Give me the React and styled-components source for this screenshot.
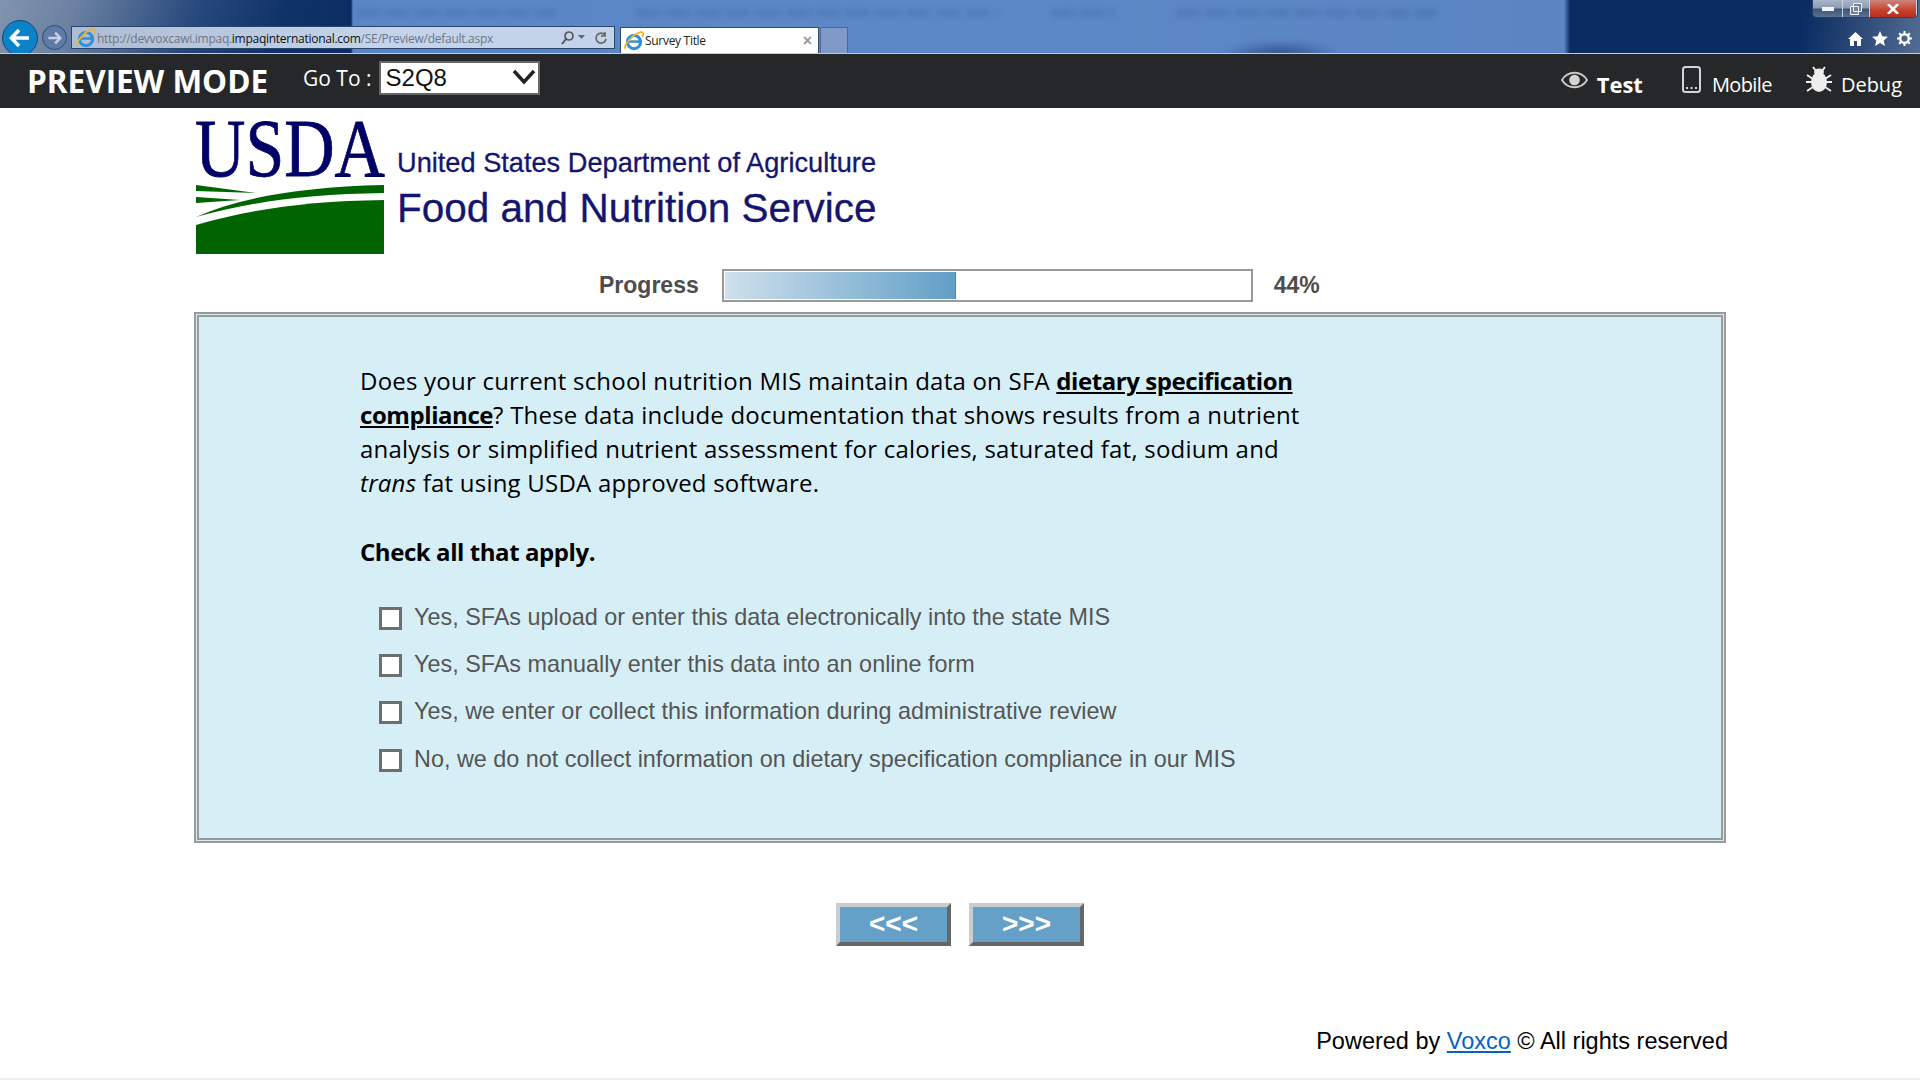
import styled, { createGlobalStyle } from 'styled-components';

const options = [
  'Yes, SFAs upload or enter this data electronically into the state MIS',
  'Yes, SFAs manually enter this data into an online form',
  'Yes, we enter or collect this information during administrative review',
  'No, we do not collect information on dietary specification compliance in our MIS',
];

const IeIcon = ({ size = 22 }) => (
  <svg width={size} height={size} viewBox="0 0 20 20">
    <circle cx="10" cy="11" r="6" fill="none" stroke="#2f8fd8" strokeWidth="2.800" />
    <path d="M5 10.500h10.500" stroke="#2f8fd8" strokeWidth="2.200" />
    <path d="M2 17C1 13 9 4 16 2c3-.5 3 2 1.500 4.500" fill="none" stroke="#f0b429" strokeWidth="1.600" />
  </svg>
);

const App = () => {
  return (
    <>
      <GlobalStyle />
      <Page>
        <BrowserChrome>
          <BackButton>
            <svg width="22" height="20" viewBox="0 0 22 20">
              <path d="M10 2 2.500 10l7.500 8M3 10h17" fill="none" stroke="#fff" strokeWidth="3.600" />
            </svg>
          </BackButton>
          <ForwardButton>
            <svg width="15" height="14" viewBox="0 0 22 20">
              <path d="M12 2l7.500 8-7.500 8M19 10H2" fill="none" stroke="#c6d0de" strokeWidth="3.600" />
            </svg>
          </ForwardButton>
          <AddressBar>
            <IeIcon />
            <Url>
              http://devvoxcawi.impaq.<strong>impaqinternational.com</strong>/SE/Preview/default.aspx
            </Url>
            <AddressTools>
              <svg width="15" height="15" viewBox="0 0 15 15">
                <circle cx="9" cy="6" r="4" fill="none" stroke="#555" strokeWidth="1.700" />
                <path d="M6 9l-4 5" stroke="#555" strokeWidth="2" />
              </svg>
              <svg width="7" height="5" viewBox="0 0 7 5"><path d="M0 0h7L3.500 4z" fill="#666" /></svg>
              <svg width="14" height="14" viewBox="0 0 14 14" style={{ marginLeft: 6 }}>
                <path d="M11 4a5 5 0 1 0 1 4M11 1v4H7" fill="none" stroke="#666" strokeWidth="1.600" />
              </svg>
            </AddressTools>
          </AddressBar>
          <Tab>
            <IeIcon />
            <TabTitle>Survey Title</TabTitle>
            <TabClose>×</TabClose>
          </Tab>
          <NewTab />
          <ChromeRight>
            <WindowButtons>
              <WindowButton $w={30}>
                <svg width="12" height="4"><rect width="12" height="4" fill="#f1f4f8" /></svg>
              </WindowButton>
              <WindowButton $w={27}>
                <svg width="12" height="12" viewBox="0 0 12 12">
                  <path d="M3.500.500h8v8h-8zM.500 3.500h8v8h-8z" fill="#70819a" stroke="#f1f4f8" />
                </svg>
              </WindowButton>
              <WindowButton $w={47} $close>
                <svg width="12" height="10" viewBox="0 0 12 10">
                  <path d="M1 0l10 10M11 0 1 10" stroke="#fff" strokeWidth="2.600" />
                </svg>
              </WindowButton>
            </WindowButtons>
            <ChromeIcons>
              <svg width="15" height="14" viewBox="0 0 15 14">
                <path d="M7.500 0 15 7h-2v7H9V9H6v5H2V7H0z" fill="#fff" />
              </svg>
              <svg width="16" height="15" viewBox="0 0 16 15">
                <path d="M8 0l2.300 5.200 5.700.5-4.300 3.700 1.300 5.600L8 12l-5 3 1.300-5.600L0 5.700l5.700-.5z" fill="#fff" />
              </svg>
              <svg width="15" height="15" viewBox="0 0 15 15">
                <circle cx="7.500" cy="7.500" r="4.300" fill="none" stroke="#fff" strokeWidth="2.400" />
                <path d="M7.500 0v3M7.500 12v3M0 7.500h3M12 7.500h3M2.200 2.200l2 2M10.800 10.800l2 2M12.800 2.200l-2 2M4.200 10.800l-2 2" stroke="#fff" strokeWidth="2" />
              </svg>
            </ChromeIcons>
          </ChromeRight>
        </BrowserChrome>

        <Toolbar>
          <ModeTitle>PREVIEW MODE</ModeTitle>
          <GoToLabel>Go To :</GoToLabel>
          <GoToBox>
            <GoToSelect defaultValue="S2Q8">
              <option>S2Q8</option>
            </GoToSelect>
            <Chevron width="24" height="16" viewBox="0 0 24 16">
              <path d="M2 2l10 11L22 2" fill="none" stroke="#222" strokeWidth="3.500" />
            </Chevron>
          </GoToBox>
          <ToolLinks>
            <ToolLink $bold $iconGap={9}>
              <svg width="27" height="18" viewBox="0 0 28 18">
                <path d="M1 9c6-10 20-10 26 0-6 10-20 10-26 0z" fill="none" stroke="#c8c8c8" strokeWidth="2" />
                <circle cx="14" cy="9" r="5.500" fill="#d4d4d4" />
              </svg>
              Test
            </ToolLink>
            <ToolLink $iconGap={11} $tight>
              <svg width="19" height="27" viewBox="0 0 19 27">
                <rect x="1" y="1" width="17" height="25" rx="2.500" fill="none" stroke="#d4d4d4" strokeWidth="2" />
                <path d="M4 22h2M8.500 22h2M13 22h2" stroke="#d4d4d4" strokeWidth="2" />
              </svg>
              Mobile
            </ToolLink>
            <ToolLink $iconGap={9}>
              <svg width="26" height="27" viewBox="0 0 26 27">
                <ellipse cx="13" cy="16" rx="8" ry="10" fill="#eee" />
                <ellipse cx="13" cy="6" rx="5" ry="3.500" fill="#eee" />
                <path d="M7 1l3 4M19 1l-3 4M1 9l6 4M25 9l-6 4M0 16h6M26 16h-6M1 25l6-4M25 25l-6-4" stroke="#eee" strokeWidth="2" />
              </svg>
              Debug
            </ToolLink>
          </ToolLinks>
        </Toolbar>

        <Header>
          <LogoMark width="190" height="134" viewBox="0 0 190 134">
            <text x="0" y="56" fontFamily="Liberation Serif" fontSize="82" fill="#000066" stroke="#000066" strokeWidth="0.800" textLength="190" lengthAdjust="spacingAndGlyphs">USDA</text>
            <path d="M1 65l60 8-60-2zM1 77l44 3-44 3zM1 97c40-18 100-30 188-32v8C110 74 50 83 1 97z" fill="#006400" />
            <path d="M1 105c50-15 110-24 188-25v54H1z" fill="#006400" />
          </LogoMark>
          <AgencyText>
            <AgencyDept>United States Department of Agriculture</AgencyDept>
            <AgencyName>Food and Nutrition Service</AgencyName>
          </AgencyText>
        </Header>

        <ProgressRow>
          <ProgressLabel>Progress</ProgressLabel>
          <ProgressTrack>
            <ProgressFill $value={44} />
          </ProgressTrack>
          <ProgressLabel>44%</ProgressLabel>
        </ProgressRow>

        <QuestionPanel>
          <QuestionText>
            Does your current school nutrition MIS maintain data on SFA <Term>dietary specification compliance</Term>? These data include documentation that shows results from a nutrient analysis or simplified nutrient assessment for calories, saturated fat, sodium and <em>trans</em> fat using USDA approved software.
          </QuestionText>
          <Instruction>Check all that apply.</Instruction>
          <OptionList>
            {options.map((text) => (
              <OptionRow key={text}>
                <OptionCheck type="checkbox" />
                {text}
              </OptionRow>
            ))}
          </OptionList>
        </QuestionPanel>

        <NavButtons>
          <NavButton>&lt;&lt;&lt;</NavButton>
          <NavButton>&gt;&gt;&gt;</NavButton>
        </NavButtons>

        <Footer>
          Powered by <FooterLink href="#">Voxco</FooterLink> © All rights reserved
        </Footer>
      </Page>
    </>
  );
};

const GlobalStyle = createGlobalStyle`
  html, body {
    margin: 0;
    padding: 0;
    background: #fff;
    overflow: hidden;
  }
  * {
    box-sizing: border-box;
  }
`;

const Page = styled.div`
  width: 1920px;
  height: 1080px;
  display: flex;
  flex-direction: column;
  border-bottom: 2px solid #eee;
`;

const blurStripes = 'repeating-linear-gradient(90deg, rgba(45,80,140,.2) 0 20px, rgba(45,80,140,.06) 24px 30px)';

const BrowserChrome = styled.div`
  height: 54px;
  display: flex;
  align-items: flex-end;
  padding-left: 2px;
  border-bottom: 1px solid #b9cde6;
  overflow: hidden;
  position: relative;
  background:
    linear-gradient(90deg, transparent 0 351px, #5b86c6 353px, #5d88c7 1000px, #5a84c2 1564px, transparent 1570px),
    linear-gradient(100deg, #0a2c62 0 1780px, #5f7699 1920px);

  /* blurred page behind the glass, left corner */
  &::before {
    content: '';
    position: absolute;
    left: 0;
    top: 0;
    width: 351px;
    height: 53px;
    background: linear-gradient(112deg, #8294ad 0, #6b82a3 70px, #26477c 190px, #0f3268 270px, #0a2c62 351px);
  }

  /* blurred page text showing through */
  &::after {
    content: '';
    position: absolute;
    left: 0;
    top: 0;
    width: 1566px;
    height: 60px;
    filter: blur(2.500px);
    background:
      radial-gradient(ellipse 60px 14px at 1280px 54px, rgba(30,60,110,.7), transparent),
      ${blurStripes} 356px 9px / 200px 8px no-repeat,
      ${blurStripes} 637px 9px / 362px 8px no-repeat,
      ${blurStripes} 1051px 9px / 65px 8px no-repeat,
      ${blurStripes} 1176px 9px / 261px 8px no-repeat;
  }

  > * {
    position: relative;
    z-index: 1;
  }
`;

const BackButton = styled.div`
  width: 36px;
  height: 36px;
  margin-bottom: -3px;
  border-radius: 50%;
  border: 1px solid #16467f;
  background: #0a83c8;
  display: flex;
  align-items: center;
  justify-content: center;
  flex-shrink: 0;
`;

const ForwardButton = styled.div`
  width: 25px;
  height: 25px;
  margin: 0 4px 3px 4px;
  border-radius: 50%;
  border: 1px solid #2c4d7e;
  background: #5e7ba6;
  display: flex;
  align-items: center;
  justify-content: center;
  flex-shrink: 0;
`;

const AddressBar = styled.div`
  width: 544px;
  height: 23px;
  margin-bottom: 4px;
  padding: 0 6px 0 3px;
  display: flex;
  align-items: center;
  gap: 0;
  background: linear-gradient(90deg, #afbdd2, #c3d3ea 300px);
  border: 1px solid #27456f;
  flex-shrink: 0;
`;

const Url = styled.span`
  flex: 1;
  padding-top: 1px;
  font: 12px "Open Sans", sans-serif;
  letter-spacing: -0.27px;
  color: #6d7685;
  white-space: nowrap;
  strong {
    font-weight: 400;
    color: #111;
  }
`;

const AddressTools = styled.div`
  display: flex;
  align-items: center;
  gap: 3px;
`;

const Tab = styled.div`
  width: 199px;
  height: 26px;
  margin-left: 5px;
  padding: 0 6px 0 2px;
  display: flex;
  align-items: center;
  background: #fff;
  border: 1px solid #2b4a78;
  border-bottom: none;
  flex-shrink: 0;
`;

const TabTitle = styled.span`
  flex: 1;
  font: 12px "Open Sans", sans-serif;
  letter-spacing: -0.3px;
  color: #222;
`;

const TabClose = styled.span`
  font: bold 16px "Liberation Sans", sans-serif;
  color: #999;
`;

const NewTab = styled.div`
  width: 28px;
  height: 26px;
  margin-left: 1px;
  background: #7f9ac6;
  border: 1px solid #4b6a9a;
  border-bottom: none;
  flex-shrink: 0;
`;

const ChromeRight = styled.div`
  margin-left: auto;
  height: 53px;
  padding-right: 2px;
  display: flex;
  flex-direction: column;
  align-items: flex-end;
  flex-shrink: 0;
`;

const WindowButtons = styled.div`
  display: flex;
  height: 18px;
  border: 1px solid #2d3f5c;
  border-top: none;
  border-radius: 0 0 5px 5px;
  overflow: hidden;
`;

const WindowButton = styled.div`
  width: ${(p) => p.$w}px;
  display: flex;
  align-items: center;
  justify-content: center;
  border-right: 1px solid #c8d2e0;
  background: ${(p) => (p.$close
    ? 'linear-gradient(#c9877c, #c9402c 60%, #b5301f)'
    : 'linear-gradient(#a9b5c8, #8f9db4 45%, #3e5679 55%, #5a7193)')};
`;

const ChromeIcons = styled.div`
  display: flex;
  align-items: center;
  gap: 9px;
  margin: 13px 6px 0 0;
`;

const Toolbar = styled.div`
  height: 54px;
  display: flex;
  align-items: center;
  padding-left: 27px;
  background: #262729;
  color: #fff;
  flex-shrink: 0;
`;

const ModeTitle = styled.h1`
  width: 276px;
  margin: 0 0 2px;
  font: 700 31.500px "Open Sans", sans-serif;
  color: #fff;
  white-space: nowrap;
`;

const GoToLabel = styled.span`
  margin: 0 7px 7px 0;
  font: 400 21px "Open Sans", sans-serif;
`;

const GoToBox = styled.div`
  position: relative;
  width: 161px;
  height: 34px;
  margin-bottom: 6px;
`;

const GoToSelect = styled.select`
  appearance: none;
  width: 100%;
  height: 100%;
  padding: 0 0 2px 5px;
  border: 2px solid #666;
  border-radius: 0;
  background: #fff;
  color: #111;
  font: 24px "Liberation Sans", sans-serif;
`;

const Chevron = styled.svg`
  position: absolute;
  right: 4px;
  top: 8px;
  pointer-events: none;
`;

const ToolLinks = styled.div`
  margin-left: auto;
  padding: 6px 18px 0 0;
  display: flex;
  align-items: center;
  gap: 34px;

  svg {
    margin-bottom: 9px;
  }
`;

const ToolLink = styled.a`
  display: flex;
  align-items: center;
  gap: ${(p) => p.$iconGap}px;
  margin-right: ${(p) => (p.$bold ? 5 : 0)}px;
  font: ${(p) => (p.$bold ? 700 : 400)} ${(p) => (p.$bold ? 22 : 20)}px "Open Sans", sans-serif;
  letter-spacing: ${(p) => (p.$tight ? '-0.6px' : '0')};
  color: #fff;
`;

const Header = styled.header`
  height: 134px;
  margin-top: 12px;
  padding-left: 195px;
  display: flex;
  align-items: flex-start;
  gap: 12px;
  flex-shrink: 0;
`;

const LogoMark = styled.svg`
  overflow: visible;
  flex-shrink: 0;
`;

const AgencyText = styled.div`
  display: flex;
  flex-direction: column;
  padding-top: 27px;
  color: #15156e;
  font-family: "Liberation Sans", sans-serif;
  -webkit-text-stroke: 0.3px #15156e;
`;

const AgencyDept = styled.span`
  font-size: 27.200px;
  line-height: 32px;
`;

const AgencyName = styled.span`
  margin-top: 6px;
  font-size: 40.500px;
  line-height: 46px;
`;

const ProgressRow = styled.div`
  height: 33px;
  margin-top: 15px;
  padding-left: 599px;
  display: flex;
  align-items: center;
  flex-shrink: 0;
`;

const ProgressLabel = styled.span`
  font: 700 23px "Liberation Sans", sans-serif;
  color: #4d4d4d;
`;

const ProgressTrack = styled.div`
  width: 531px;
  height: 33px;
  margin: 0 21px 0 23px;
  padding: 1px;
  border: 2px solid #999;
  background: #fff;
`;

const ProgressFill = styled.div`
  width: ${(p) => p.$value}%;
  height: 100%;
  background: linear-gradient(90deg, #cfe0ec, #629fc7);
  border-right: 1px solid #777;
`;

const QuestionPanel = styled.section`
  height: 531px;
  margin: 10px 194px 0 194px;
  padding: 47px 0 0 161px;
  border: 5px double #999;
  background: #d6eff7;
  flex-shrink: 0;
`;

const QuestionText = styled.p`
  width: 960px;
  margin: 0;
  font: 400 24px/34px "Open Sans", sans-serif;
  letter-spacing: 0.22px;
  color: #000;
`;

const Term = styled.strong`
  letter-spacing: -0.43px;
  text-decoration: underline;
`;

const Instruction = styled.p`
  margin: 35px 0 0;
  font: 700 24px/34px "Open Sans", sans-serif;
  letter-spacing: -0.43px;
  color: #000;
`;

const OptionList = styled.div`
  margin-top: 25px;
  padding-left: 19px;
  display: flex;
  flex-direction: column;
`;

const OptionRow = styled.label`
  height: 47.200px;
  display: flex;
  align-items: center;
  gap: 12px;
  font: 400 23.400px "Liberation Sans", sans-serif;
  color: #555;
`;

const OptionCheck = styled.input`
  appearance: none;
  width: 23px;
  height: 23px;
  margin: 2px 0 0;
  border: 3px solid #6e6e6e;
  border-radius: 0;
  background: #fff;
`;

const NavButtons = styled.div`
  margin-top: 60px;
  display: flex;
  justify-content: center;
  gap: 18px;
  flex-shrink: 0;
`;

const NavButton = styled.button`
  width: 115px;
  height: 43px;
  padding: 0 0 2px;
  border: 4px solid;
  border-color: #ccc #666 #666 #ccc;
  background: #64a0c8;
  color: #fff;
  font: 700 28px "Liberation Sans", sans-serif;
`;

const Footer = styled.footer`
  margin-top: 82px;
  padding-right: 192px;
  text-align: right;
  font: 400 23.500px "Liberation Sans", sans-serif;
  color: #000;
`;

const FooterLink = styled.a`
  color: #0563c1;
`;

export default App;
